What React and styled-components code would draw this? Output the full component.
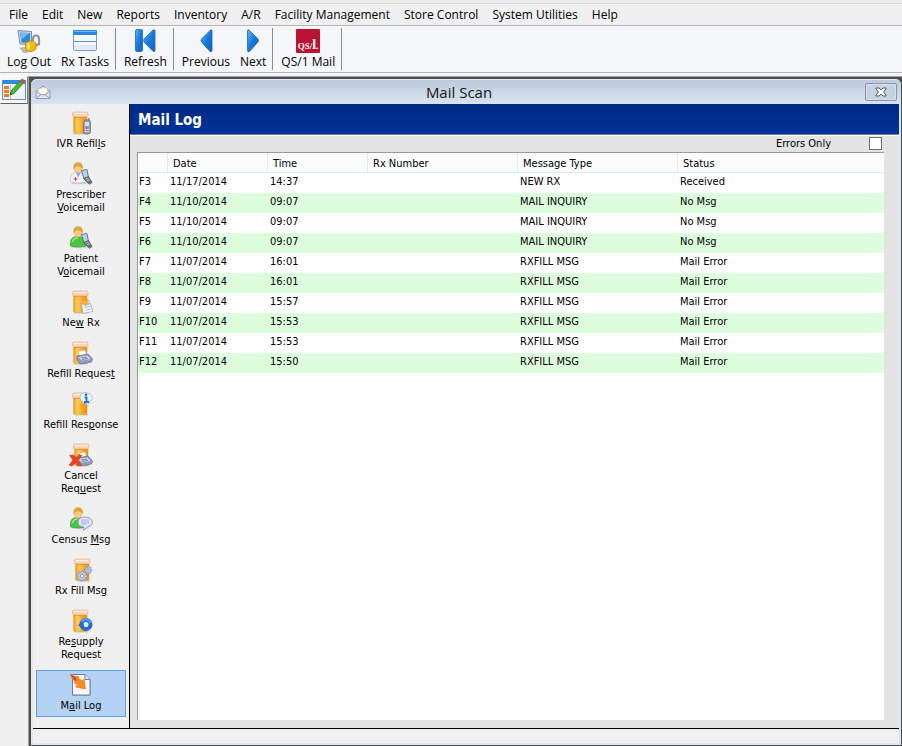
import React, { useState } from "react";
import styled, { createGlobalStyle, css } from "styled-components";

const GlobalStyle = createGlobalStyle`
  *, *::before, *::after { box-sizing: border-box; }
  html, body, #root { height: 100%; }
  body { margin: 0; background: #f0f0f0; color: #000; }
  button { font: inherit; color: inherit; }
`;

const uiFont = `"Open Sans", "Noto Sans", sans-serif`;
const tableFont = `"DejaVu Sans Condensed", "Noto Sans", sans-serif`;

const Page = styled.div`
  display: flex;
  flex-direction: column;
  min-height: 100vh;
  font: 12px/16px ${uiFont};
`;

const MenuBar = styled.nav`
  display: flex;
  height: 26px;
  padding: 4px 0 0 2px;
  border-bottom: 1px solid #b4b4b4;
  background: linear-gradient(#ededed 3px, #d6d6d6 3px, #d6d6d6 4px, #f0f0f0 4px);
`;

const MenuItem = styled.button`
  padding: 0 7px;
  border: 0;
  background: none;
  white-space: nowrap;
  &:hover { background: #d8e6f5; }
`;

const Toolbar = styled.div`
  display: flex;
  height: 47px;
  padding-top: 2px;
  border-bottom: 1px solid #b4b4b4;
  background: #f5f6f8;
`;

const ToolGroup = styled.div`
  display: flex;
  height: 42px;
  padding: 0 1px 0 3px;
  border-right: 1px solid #8c8c8c;
  &:first-child { padding-left: 2px; }
`;

const ToolButton = styled.button`
  display: flex;
  flex-direction: column;
  align-items: center;
  padding: 1px 5px 0;
  border: 0;
  background: none;
  white-space: nowrap;
  svg { flex: none; margin-bottom: 1px; }
`;

const Workspace = styled.div`
  display: flex;
  flex: 1;
  border-top: 3px solid #f5f6f8;
`;

const DockStrip = styled.aside`
  width: 28px;
  flex: none;
  background: #f0f0f0;
`;

const DockButton = styled.button`
  display: block;
  width: 28px;
  height: 28px;
  padding: 1px;
  border: 1px solid #fff;
  border-right: 1px solid #808080;
  border-bottom: 1px solid #606060;
  background: #f6f6f6;
`;

const WindowBack = styled.div`
  display: flex;
  flex: 1;
  min-width: 0;
  border-top: 1px solid #a0a0a0;
  border-left: 1px solid #a0a0a0;
  background: #505050;
`;

const Window = styled.main`
  display: flex;
  flex: 1;
  flex-direction: column;
  min-width: 0;
  margin: 1px 0 0 1px;
  padding: 0 2px 2px;
  border: 1px solid #4b4b4b;
  border-radius: 7px 7px 0 0;
  background: #dde7f3;
`;

const TitleBar = styled.header`
  display: grid;
  grid-template-columns: 32px 1fr 32px;
  align-items: center;
  height: 25px;
  margin: 0 -2px;
  padding: 0 4px;
  border-top: 1px solid #e4ebf3;
  border-radius: 6px 6px 0 0;
  background: linear-gradient(#bccadb, #d8e4f0);
`;

const WindowTitle = styled.h1`
  margin: 0;
  padding-right: 14px;
  font: 15px/22px ${uiFont};
  text-align: center;
  color: #151515;
`;

const CloseButton = styled.button`
  display: grid;
  place-items: center;
  width: 32px;
  height: 18px;
  padding: 0;
  border: 1px solid #8794a6;
  border-radius: 2px;
  background: #c6d3e2;
  box-shadow: inset 0 0 0 1px #d7e1ec;
`;

const WindowBody = styled.div`
  display: flex;
  flex: 1;
  min-width: 0;
  border-bottom: 1px solid #000;
`;

const Sidebar = styled.nav`
  display: flex;
  flex: none;
  flex-direction: column;
  gap: 4px;
  width: 97px;
  padding: 4px 3px 10px;
  border-right: 1px solid #000;
  background: #f0f0f0;
  font: 11px/13px ${tableFont};
`;

const SideItem = styled.button`
  display: flex;
  flex-direction: column;
  align-items: center;
  padding: 2px 4px 4px;
  border: 1px solid transparent;
  background: none;
  text-align: center;
  svg { flex: none; margin-bottom: 2px; }
  ${(p) => p.$active && css`
    border-color: #5a9ee6;
    background: #b4d3f4;
  `}
`;

const LabelLine = styled.span`
  white-space: pre;
`;

const Content = styled.section`
  display: flex;
  flex: 1;
  flex-direction: column;
  min-width: 0;
  background: #e3e3e3;
`;

const Heading = styled.h2`
  height: 31px;
  margin: 0;
  padding: 1px 8px 0;
  border-bottom: 1px solid #7a7a80;
  box-shadow: 0 1px 0 #fff;
  background: linear-gradient(#002b85, #003299);
  color: #fff;
  font: bold 15px/30px ${tableFont};
`;

const FilterRow = styled.label`
  display: flex;
  justify-content: flex-end;
  align-items: center;
  gap: 38px;
  height: 17px;
  padding: 0 17px 0 0;
  font: 11px/15px ${tableFont};
`;

const CheckBox = styled.input`
  appearance: none;
  width: 13px;
  height: 13px;
  margin: 0;
  border: 1px solid #6f6f6f;
  background: #fff;
  &:checked { background: #003299; box-shadow: inset 0 0 0 2px #fff; }
`;

const ListFrame = styled.div`
  flex: 1;
  margin: 0 15px 8px 7px;
  border-top: 1px solid #9a9a9a;
  border-left: 1px solid #9a9a9a;
  background: #fff;
`;

const LogTable = styled.table`
  width: 100%;
  border-collapse: separate;
  border-spacing: 0;
  table-layout: fixed;
  font: 11px/17px ${tableFont};
`;

const Column = styled.col`
  width: ${(p) => (p.$width ? `${p.$width}px` : "auto")};
`;

const HeadCell = styled.th`
  height: 20px;
  padding: 1px 5px 0;
  border-right: 1px solid #e0ecf8;
  border-bottom: 1px solid #e0ecf8;
  background: #fcfcfc;
  font-weight: normal;
  text-align: left;
  &:last-child { border-right: 0; }
`;

const Row = styled.tr`
  &:nth-child(even) { background: #ddfedd; }
`;

const Cell = styled.td`
  height: 20px;
  padding: 0 2px 3px 1px;
  white-space: nowrap;
  & + & { padding-left: 2px; }
`;

const StatusBar = styled.footer`
  height: 14px;
  background: #f0f0f0;
`;

/* ---------- drawings ---------- */

const Icon = ({ w = 24, h = 24, children }) => (
  <svg width={w} height={h} viewBox={`0 0 ${w} ${h}`} aria-hidden="true">
    {children}
  </svg>
);

const Bottle = () => (
  <g>
    <linearGradient id="amber" x1="0" x2="1">
      <stop offset="0" stopColor="#f09a1c" />
      <stop offset=".3" stopColor="#ffcf5c" />
      <stop offset=".65" stopColor="#ffa51f" />
      <stop offset="1" stopColor="#ec8a0c" />
    </linearGradient>
    <path d="M5 22h14v1.500H6z" fill="#c9c6c2" />
    <path d="M4.500 5H18v16q0 1.500-1.500 1.500H6q-1.500 0-1.500-1.500z" fill="url(#amber)" stroke="#e0a45a" strokeWidth=".5" />
    <rect x="3.500" y="1" width="15.500" height="5" rx="1.500" fill="#fdd3b4" stroke="#e2b08c" strokeWidth=".7" />
    <path d="M5 2.500h12.500" stroke="#fff3ea" strokeWidth="1.300" />
    <path d="M5 6.400h13" stroke="#e08a2a" strokeWidth=".7" />
  </g>
);

const Person = ({ doctor }) => (
  <g>
    <ellipse cx="11" cy="21" rx="9" ry="1.300" fill="#cfcfcf" />
    <path
      d="M1.500 20v-3.500q0-6 7-6t8.500 6V20q-7.500 2-15.500 0z"
      fill={doctor ? "#f3f6ff" : "#4cc442"}
      stroke={doctor ? "#b4bdd6" : "#37a02f"}
      strokeWidth=".7"
    />
    {doctor ? (
      <g>
        <path d="M7 10.500l2 5 3-5z" fill="#7fb0ea" />
        <path d="M4.500 17h4M6.500 15v4" stroke="#e84040" strokeWidth="1.100" />
      </g>
    ) : (
      <path d="M3.500 16q1-4 5-4" stroke="#9be884" strokeWidth="1.700" fill="none" />
    )}
    <ellipse cx="9" cy="6.500" rx="3.800" ry="4.500" fill="#fbcb8a" stroke="#d89c4c" strokeWidth=".5" />
    <path d="M4.800 6.500Q4.200.8 9 .6q5.300.2 4.500 6-1.500-2.400-5-2.800-2.500.2-3.700 2.700z" fill="#e6a72c" stroke="#c48a20" strokeWidth=".4" />
  </g>
);

const Phone = () => (
  <g>
    <path d="M12.500 8.500l5.500-1 1.500 8-4.500 1.500z" fill="#b4d2ee" stroke="#5c6a7c" strokeWidth=".9" />
    <path d="M14.500 16.500l5-2 3.500 6-2.500 1.800z" fill="#6e7681" stroke="#4b5560" strokeWidth=".8" />
    <path d="M16.500 17l3-1M18 18.700l3-1" stroke="#cdd4db" strokeWidth=".8" />
  </g>
);

const Fax = () => (
  <g>
    <path d="M9 10.500l7-1.500 2 6-7 1z" fill="#fff" stroke="#b3bccc" strokeWidth=".6" />
    <path d="M8 15l11-2 4.500 5-1 3-11.500 2-3-4z" fill="#8f9cc0" stroke="#5c6b92" strokeWidth=".7" />
    <path d="M9.500 16l9-1.600 3 3.500-9 1.600z" fill="#d2daeb" />
    <path d="M12 17l6-1M13 18.400l6-1" stroke="#6a7ba4" strokeWidth=".9" />
  </g>
);

const gearPath = (cx, cy, r, n) => {
  let d = "";
  for (let i = 0; i < n * 4; i += 1) {
    const a = (i / (n * 4)) * Math.PI * 2;
    const q = i % 4 < 2 ? r : r * 0.74;
    d += `${i ? "L" : "M"}${(cx + Math.cos(a) * q).toFixed(1)} ${(cy + Math.sin(a) * q).toFixed(1)}`;
  }
  return `${d}Z`;
};

const Gear = ({ cx, cy, r }) => (
  <g>
    <path d={gearPath(cx, cy, r, 8)} fill="#c0c6e0" stroke="#7f88ad" strokeWidth=".7" />
    <circle cx={cx} cy={cy} r={r * 0.3} fill="#f6f7fc" stroke="#7f88ad" strokeWidth=".7" />
  </g>
);

const sideIcons = {
  ivr: (
    <Icon>
      <Bottle />
      <path d="M20 7v3" stroke="#6b7688" strokeWidth="1.300" />
      <rect x="14.500" y="9" width="7" height="14" rx="2.500" fill="#98a1b2" stroke="#667184" strokeWidth=".8" />
      <rect x="16" y="11" width="4" height="4" fill="#cfe3f5" />
      <path d="M16 18.500h4M16 20.500h4" stroke="#e8ecf3" strokeDasharray="1 .6" />
      <circle cx="18" cy="16.700" r="1" fill="#e16943" />
    </Icon>
  ),
  doctor: <Icon><Person doctor /><Phone /></Icon>,
  patient: <Icon><Person /><Phone /></Icon>,
  newRx: (
    <Icon>
      <Bottle />
      <path d="M12 11.500l8-1 4 11-10 2z" fill="#f3f7ff" stroke="#93a8d0" strokeWidth=".8" />
      <path d="M15.500 15l5-1M16 17.500l5-1M17 20l5-1" stroke="#a3b7dd" />
      <path d="M15 8l1.300 2.200 2.500-.6-.6 2.500 2 1.400-2.700.5-.9 2.300-1.600-2.100-2.700-.1 1.700-2.100-.8-2.400 2.300.4z" fill="#ffb032" stroke="#f08a2c" strokeWidth=".5" />
    </Icon>
  ),
  refill: <Icon><Bottle /><Fax /></Icon>,
  response: (
    <Icon>
      <Bottle />
      <path d="M12 2q5-3 9 0 2 1 3 4-2 4-4 5l-2 3-1-3q-4 0-6-4 0-3 1-5z" fill="#edf2ff" stroke="#a8b6d8" strokeWidth=".8" />
      <path d="M15.500 5.500h2v4M15 10h5" stroke="#1975d3" strokeWidth="1.800" fill="none" />
      <circle cx="17" cy="2.800" r="1.300" fill="#1975d3" />
    </Icon>
  ),
  cancel: (
    <Icon>
      <g transform="translate(1 0)"><Bottle /></g>
      <Fax />
      <path d="M.5 12.500l4-.5L7 15l3-3.500 3 1-4 5 3.500 4-3.500 1.500L6.500 20 3 23l-3-1 4-5z" fill="#f0431f" stroke="#cc3018" strokeWidth=".6" />
    </Icon>
  ),
  census: (
    <Icon>
      <Person />
      <path d="M15.500 10q7 0 8 5 0 4-5 5l-4 3.500.5-3.500q-6-.5-6-5 .5-5 6.500-5z" fill="#e1e5fb" stroke="#8e97c4" strokeWidth=".9" />
      <path d="M12 13h8M12 15h8M12 17h6" stroke="#a9b0d6" />
    </Icon>
  ),
  gears: <Icon><g transform="translate(2 0)"><Bottle /></g><Gear cx={19} cy={12} r={4} /><Gear cx={13} cy={18} r={5.5} /></Icon>,
  resupply: (
    <Icon>
      <Bottle />
      <circle cx="17" cy="15.500" r="4.500" fill="#f2f6fd" stroke="#1f6dd4" strokeWidth="4" />
      <path d="M13 13a4.500 4.500 0 0 1 8.500 1" fill="none" stroke="#4d9bf5" strokeWidth="2.500" />
      <path d="M9 17h6l-3-4.500z" fill="#1f6dd4" />
    </Icon>
  ),
  log: (
    <Icon>
      <path d="M3 2h14l5 5v16H3z" fill="#9fb0c8" />
      <path d="M3.500 1.500h12.500l5 5v15.500H3.500z" fill="#f5f8fc" stroke="#6c7f9d" />
      <path d="M16 1.500v5h5" fill="#dce6f2" stroke="#6c7f9d" />
      <path d="M1 1l6 3 2-1 1 3 4 2 1-2 1.500 10-10-2 2-2-3-2V7L4 7z" fill="#fb8c16" stroke="#e8652a" strokeWidth=".6" />
      <path d="M1 1l6 3 1 4-3-1z" fill="#e0482a" />
    </Icon>
  ),
};

const toolIcons = {
  logout: (
    <Icon>
      <path d="M3 19l12-1 2 3-10 3z" fill="#bcbcb5" stroke="#9e9e98" strokeWidth=".6" />
      <path d="M1 1.500l13.500 1V16L3 15z" fill="#c4d1dc" stroke="#7d91a4" />
      <path d="M3 3.500l10 .7V14l-8.500-.5z" fill="#2e87d7" />
      <path d="M3 3.500l9 .7L4 11z" fill="#73b9f2" />
      <path d="M16 12v-2q0-3.500 3-3.500t3 3.500v5l-4 2" fill="none" stroke="#8f959a" strokeWidth="2.200" />
      <path d="M8.500 14q5-4 10.500 0v6q-5 5-10.500 0z" fill="#f1bd12" stroke="#b98a10" strokeWidth=".8" />
      <path d="M11.500 14.500v6" stroke="#ffeb7d" strokeWidth="2.200" />
    </Icon>
  ),
  tasks: (
    <Icon>
      <rect x=".5" y="1.500" width="23" height="20" rx="1" fill="#f6f9fe" stroke="#7b9cc9" />
      <rect x="0" y="1" width="24" height="5" rx="1" fill="#2389e4" />
      <path d="M1 2.500h22" stroke="#70bafa" />
      <path d="M1 12.500h22" stroke="#5c8fd2" />
      <path d="M1 16h22v5H1z" fill="#e3ebf9" />
    </Icon>
  ),
  refresh: (
    <Icon>
      <linearGradient id="arrow" x1="0" y1="0" x2="1" y2="1">
        <stop offset="0" stopColor="#62b6fb" />
        <stop offset=".5" stopColor="#1778dd" />
        <stop offset="1" stopColor="#0b62c8" />
      </linearGradient>
      <rect x="2.500" y=".5" width="7" height="22" rx="1.500" fill="url(#arrow)" stroke="#1c66b8" strokeWidth=".8" />
      <path d="M21 .8q1 0 1 1v19.500q0 2-2 1L11 13q-1-1.500 0-3l9-9z" fill="url(#arrow)" stroke="#1c66b8" strokeWidth=".8" />
    </Icon>
  ),
  previous: (
    <Icon>
      <path d="M16.500 1Q18 0 18 2v19.500q0 2-2 1L7.500 13q-1-1.500 0-3z" fill="url(#arrow)" stroke="#1c66b8" strokeWidth=".8" />
    </Icon>
  ),
  next: (
    <Icon>
      <path d="M8 1Q6.500 0 6.500 2v19.500q0 2 2 1L17 13q1-1.500 0-3z" fill="url(#arrow)" stroke="#1c66b8" strokeWidth=".8" />
    </Icon>
  ),
  mail: (
    <Icon>
      <rect width="24" height="24" rx="1" fill="#bd1232" />
      <text x="12" y="20" textAnchor="middle" fill="#fff" fontFamily="Liberation Serif, serif" fontWeight="bold" fontSize="9">
        QS/<tspan fontSize="14">l</tspan>.
      </text>
    </Icon>
  ),
};

const PlannerIcon = () => (
  <Icon w={24} h={24}>
    <rect x=".5" y="2.500" width="23" height="19" fill="#eef3fc" stroke="#6b8dc5" />
    <rect x="1" y="2" width="22" height="4" fill="#2c8be0" />
    <path d="M2 8h5v3H2zM2 12h5v3H2zM2 16h5v3H2z" fill="#f47b17" />
    <path d="M8.500 7v14" stroke="#b5c8e5" />
    <path d="M18 3l3 2.500-9 10L8 17l1-4z" fill="#48b936" stroke="#25791c" strokeWidth=".8" />
    <path d="M18 3l2-2.500 3 2L21 5.500z" fill="#e04440" />
    <path d="M8 17l.5-2 1.500 1z" fill="#333" />
  </Icon>
);

const EnvelopeIcon = () => (
  <Icon w={16} h={16}>
    <path d="M1 7l7-5 7 5v7.500H1z" fill="#e4e2f4" stroke="#8582ab" strokeWidth=".8" />
    <path d="M3 5q5-2 9-1l1 5-5 3-5-3z" fill="#fffdf0" stroke="#c8c1a7" strokeWidth=".6" />
    <path d="M1.500 14L6 10.500h4l4.500 3.500M1.500 7.500L6 10.500M14.500 7.500L10 10.500" fill="none" stroke="#918eb5" strokeWidth=".8" />
  </Icon>
);

const CloseIcon = () => (
  <Icon w={12} h={10}>
    <path d="M1 1h3l2 2 2-2h3v1L8.500 5 11 8v1H8L6 7 4 9H1V8l2.500-3L1 2z" fill="#fff" stroke="#505966" />
  </Icon>
);

/* ---------- data ---------- */

const menus = ["File", "Edit", "New", "Reports", "Inventory", "A/R", "Facility Management", "Store Control", "System Utilities", "Help"];

const toolGroups = [
  [["logout", "Log Out"], ["tasks", "Rx Tasks"]],
  [["refresh", "Refresh"]],
  [["previous", "Previous"], ["next", "Next"]],
  [["mail", "QS/1 Mail"]],
];

/* One entry per label line; "&" precedes the underlined access key. */
const sideItems = [
  ["ivr", "IVR Refil&ls"],
  ["doctor", "Prescriber", "&Voicemail"],
  ["patient", "Patient", "V&oicemail"],
  ["newRx", "Ne&w Rx"],
  ["refill", "Refill Reques&t"],
  ["response", "Refill Res&ponse"],
  ["cancel", "Cancel", "Req&uest"],
  ["census", "Census &Msg"],
  ["gears", "Rx Fill Ms&g"],
  ["resupply", "Re&supply", "Request"],
  ["log", "M&ail Log"],
];

const AccessLabel = ({ text }) => {
  const at = text.indexOf("&");
  return (
    <LabelLine>
      {at < 0 ? text : <>{text.slice(0, at)}<u>{text[at + 1]}</u>{text.slice(at + 2)}</>}
    </LabelLine>
  );
};

const columns = [
  ["", 30],
  ["Date", 100],
  ["Time", 100],
  ["Rx Number", 150],
  ["Message Type", 160],
  ["Status", 0],
];

const messages = [
  ["F3", "11/17/2014", "14:37", "", "NEW RX", "Received"],
  ["F4", "11/10/2014", "09:07", "", "MAIL INQUIRY", "No Msg"],
  ["F5", "11/10/2014", "09:07", "", "MAIL INQUIRY", "No Msg"],
  ["F6", "11/10/2014", "09:07", "", "MAIL INQUIRY", "No Msg"],
  ["F7", "11/07/2014", "16:01", "", "RXFILL MSG", "Mail Error"],
  ["F8", "11/07/2014", "16:01", "", "RXFILL MSG", "Mail Error"],
  ["F9", "11/07/2014", "15:57", "", "RXFILL MSG", "Mail Error"],
  ["F10", "11/07/2014", "15:53", "", "RXFILL MSG", "Mail Error"],
  ["F11", "11/07/2014", "15:53", "", "RXFILL MSG", "Mail Error"],
  ["F12", "11/07/2014", "15:50", "", "RXFILL MSG", "Mail Error"],
];

export default function App() {
  const [active, setActive] = useState("log");
  const [errorsOnly, setErrorsOnly] = useState(false);
  const rows = errorsOnly ? messages.filter((m) => m[5] === "Mail Error") : messages;

  return (
    <Page>
      <GlobalStyle />
      <MenuBar>
        {menus.map((m) => <MenuItem key={m}>{m}</MenuItem>)}
      </MenuBar>
      <Toolbar>
        {toolGroups.map((group) => (
          <ToolGroup key={group[0][0]}>
            {group.map(([icon, label]) => (
              <ToolButton key={icon}>{toolIcons[icon]}{label}</ToolButton>
            ))}
          </ToolGroup>
        ))}
      </Toolbar>
      <Workspace>
        <DockStrip>
          <DockButton aria-label="Planner"><PlannerIcon /></DockButton>
        </DockStrip>
        <WindowBack>
          <Window>
            <TitleBar>
              <EnvelopeIcon />
              <WindowTitle>Mail Scan</WindowTitle>
              <CloseButton aria-label="Close"><CloseIcon /></CloseButton>
            </TitleBar>
            <WindowBody>
              <Sidebar>
                {sideItems.map(([icon, ...lines]) => (
                  <SideItem key={icon} $active={active === icon} onClick={() => setActive(icon)}>
                    {sideIcons[icon]}
                    {lines.map((line) => <AccessLabel key={line} text={line} />)}
                  </SideItem>
                ))}
              </Sidebar>
              <Content>
                <Heading>Mail Log</Heading>
                <FilterRow>
                  Errors Only
                  <CheckBox type="checkbox" checked={errorsOnly} onChange={(e) => setErrorsOnly(e.target.checked)} />
                </FilterRow>
                <ListFrame>
                  <LogTable>
                    <colgroup>
                      {columns.map(([name, width]) => <Column key={name} $width={width} />)}
                    </colgroup>
                    <thead>
                      <tr>{columns.map(([name]) => <HeadCell key={name}>{name}</HeadCell>)}</tr>
                    </thead>
                    <tbody>
                      {rows.map((row) => (
                        <Row key={row[0]}>
                          {row.map((value, i) => <Cell key={columns[i][0]}>{value}</Cell>)}
                        </Row>
                      ))}
                    </tbody>
                  </LogTable>
                </ListFrame>
              </Content>
            </WindowBody>
            <StatusBar />
          </Window>
        </WindowBack>
      </Workspace>
    </Page>
  );
}
